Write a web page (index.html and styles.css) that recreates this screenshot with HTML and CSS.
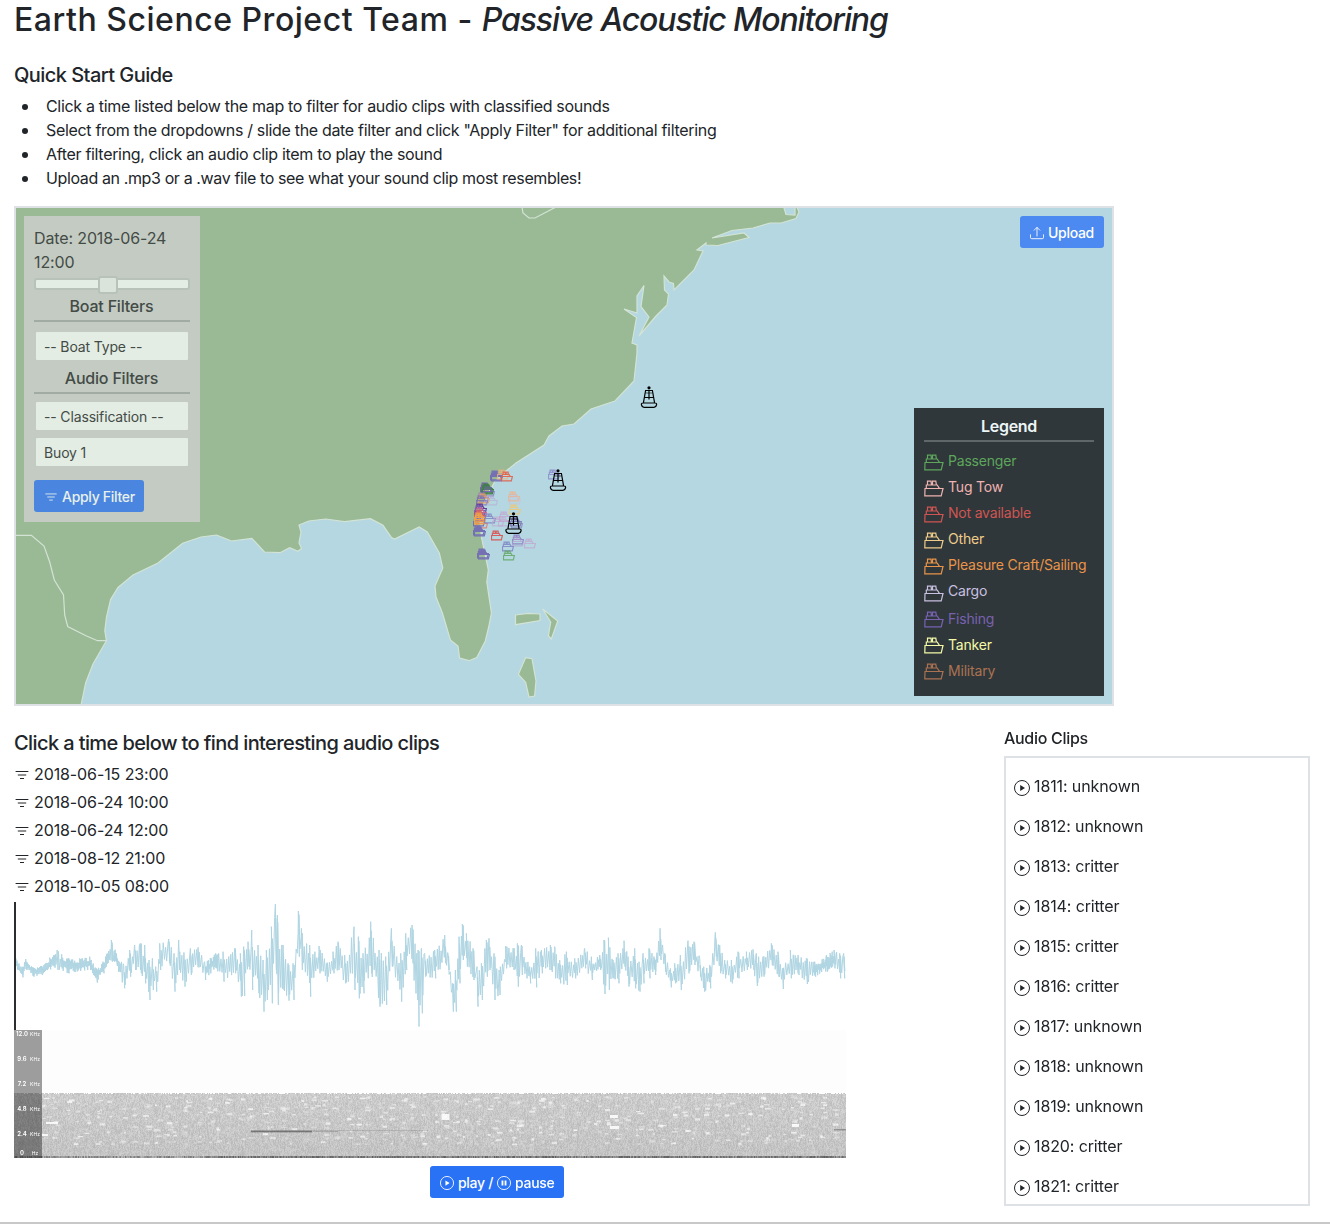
FILE: index.html
```
<!DOCTYPE html>
<html lang="en">
<head>
<meta charset="utf-8">
<title>Passive Acoustic Monitoring</title>
<link rel="stylesheet" href="styles.css">
</head>
<body>
<svg class="defs" aria-hidden="true">
  <symbol id="boat" viewBox="0 0 20 17"><path d="M1 8.5H19L17.2 15.8H.8ZM2.3 8.3V5H13.2L15.4 8.3M3.5 4.8V1.2H7L7.5 4.8M8.5 4.8V1.2H11.8L12.4 4.8" fill="none" stroke="currentColor"/></symbol>
  <symbol id="buoy" viewBox="0 0 18 24"><path d="M5.6 5.5H12.4L14.6 18H3.4ZM4.7 12.5H13.3M9 5V14.5M3 18H15Q17 18 16.5 20Q16 22.3 14 22.3H4Q2 22.3 1.5 20Q1 18 3 18Z" fill="none" stroke="#000" stroke-width="1.2"/><path d="M5.5 8H12.500" stroke="#000" stroke-width=".6"/><circle cx="9" cy="2.8" r="1.6"/></symbol>
  <symbol id="filter" viewBox="0 0 16 16"><path d="M2 4.5H14M4.2 8H11.8M6.4 11.5H9.6" stroke="currentColor" stroke-linecap="round"/></symbol>
  <symbol id="play" viewBox="0 0 16 16"><circle cx="8" cy="8" r="7.5" fill="none" stroke="currentColor"/><path d="M6.2 5V11L11 8Z" fill="currentColor"/></symbol>
  <symbol id="pause" viewBox="0 0 16 16"><circle cx="8" cy="8" r="7.5" fill="none" stroke="currentColor"/><path d="M5.2 5.2H7.3V10.8H5.2ZM8.7 5.2H10.8V10.8H8.7Z" fill="currentColor"/></symbol>
  <symbol id="upload" viewBox="0 0 16 16"><path d="M.5 10V13Q.5 14.5 2 14.5H14Q15.5 14.5 15.5 13V10M8 11.5V1.7M4.8 4.8L8 1.6L11.2 4.8" fill="none" stroke="currentColor" stroke-linecap="round"/></symbol>
</svg>
<header>
  <h1 class="title">Earth Science Project Team - <em>Passive Acoustic Monitoring</em></h1>
  <h2 class="guide-title">Quick Start Guide</h2>
  <ul class="guide">
    <li>Click a time listed below the map to filter for audio clips with classified sounds</li>
    <li>Select from the dropdowns / slide the date filter and click "Apply Filter" for additional filtering</li>
    <li>After filtering, click an audio clip item to play the sound</li>
    <li class="tight">Upload an .mp3 or a .wav file to see what your sound clip most resembles!</li>
  </ul>
</header>
<section class="map">
  <svg class="chart" viewBox="16 208 1096 496">
    <g class="land">
      <path d="M10 200H784V208L786 214.5 795 215V208L797 207 799 212 796 218.5 781 223H770L753 228 732 230.5 712 238 744 233 749 237.5 718 245.5 706 245V243L697 250 703 251 694 270 674 290 673.5 283.5 669 282 664 276 664.5 290 668.5 294 667 305 656 316 639 336 649 317 641 306.5 644 285.5 637 296V313L624 309 636.5 317.5 632 343 637 345V353L634 381 615 401 591 409 574 424 562 426 549 436 544 445 516 463 506 471 495 481 485 500 480 520 481.4 537 488.3 570 486.8 582 491.4 613 488.7 627 485.3 641 476.8 657.5 469 660.7 459.6 658 458 646 450.4 640 442.4 613 436 597 435 586 442.8 568 439.3 553 427.3 532 419.2 527 394.6 539 391.5 537.5 383 525.3 370.5 518.7 344.5 521.7 325.7 519 308.8 521 299 525 301 532 299 543 301.5 548.5 298 551.3 289.7 547.7 280 552.7 264.5 552 251.8 538.3 231.5 541 216.6 535 201 537 182.6 543.3 158 563 133 575 118 587.5 110.6 599.5 106.5 617 104.8 630.7 106.4 640.7 93 664 85.7 682.7 80 710H10Z"/>
      <path d="M515.5 615L528 613.3 540 614V620.5L515.5 624.7ZM542.7 609L557.7 621 551.3 639 548.4 635.7 550.7 622ZM525.6 657.7L532 658.7 536 681 534.6 696 529 697 525.6 682.3 518.4 674.3Z"/>
      <path d="M10 535.3H31.4L44 546 49.7 562 54.3 580 63.5 595 64.7 615 67.7 626.5 86 635.7 97.5 640.7H106.4M522 207L523 213 529 218H535L556 207" fill="none"/>
    </g>
    <g id="vessels" class="vessels"></g>
    <use href="#buoy" x="640" y="385" width="18" height="24"/>
    <use href="#buoy" x="549" y="468" width="18" height="24"/>
    <use href="#buoy" x="504.500" y="511" width="18" height="24"/>
  </svg>
  <form class="filters">
    <div class="date">Date: 2018-06-24 12:00</div>
    <div class="slider"><span class="thumb"></span></div>
    <h3 class="panel-title">Boat Filters</h3>
    <div class="select first">-- Boat Type --</div>
    <h3 class="panel-title audio">Audio Filters</h3>
    <div class="select">-- Classification --</div>
    <div class="select">Buoy 1</div>
    <button class="btn apply" type="button"><svg width="14" height="14"><use href="#filter"/></svg><span>Apply Filter</span></button>
  </form>
  <button class="btn upload" type="button"><svg width="14" height="14"><use href="#upload"/></svg><span>Upload</span></button>
  <aside class="legend">
    <h3 class="panel-title">Legend</h3>
    <ul>
      <li class="passenger"><svg><use href="#boat"/></svg>Passenger</li>
      <li class="tug"><svg><use href="#boat"/></svg>Tug Tow</li>
      <li class="na"><svg><use href="#boat"/></svg>Not available</li>
      <li class="other"><svg><use href="#boat"/></svg>Other</li>
      <li class="pleasure"><svg><use href="#boat"/></svg>Pleasure Craft/Sailing</li>
      <li class="cargo"><svg><use href="#boat"/></svg>Cargo</li>
      <li class="fishing"><svg><use href="#boat"/></svg>Fishing</li>
      <li class="tanker"><svg><use href="#boat"/></svg>Tanker</li>
      <li class="military"><svg><use href="#boat"/></svg>Military</li>
    </ul>
  </aside>
</section>
<main class="lower">
  <section class="player">
    <h2 class="times-title">Click a time below to find interesting audio clips</h2>
    <ul class="times">
      <li><svg width="16" height="16"><use href="#filter"/></svg>2018-06-15 23:00</li>
      <li><svg width="16" height="16"><use href="#filter"/></svg>2018-06-24 10:00</li>
      <li><svg width="16" height="16"><use href="#filter"/></svg>2018-06-24 12:00</li>
      <li><svg width="16" height="16"><use href="#filter"/></svg>2018-08-12 21:00</li>
      <li><svg width="16" height="16"><use href="#filter"/></svg>2018-10-05 08:00</li>
    </ul>
    <canvas id="wave" class="wave" width="830" height="128"></canvas>
    <div class="spectrogram">
      <canvas id="spectrum" width="832" height="128"></canvas>
      <div class="axis">
        <span><b>12.0</b><i>KHz</i></span><span><b>9.6</b><i>KHz</i></span><span><b>7.2</b><i>KHz</i></span><span><b>4.8</b><i>KHz</i></span><span><b>2.4</b><i>KHz</i></span><span><b>0</b><i>Hz</i></span>
      </div>
    </div>
    <button class="btn toggle" type="button"><svg width="14" height="14"><use href="#play"/></svg><span>play /</span><svg width="14" height="14"><use href="#pause"/></svg><span>pause</span></button>
  </section>
  <section class="clips">
    <h3>Audio Clips</h3>
    <ul>
      <li><svg width="16" height="16"><use href="#play"/></svg>1811: unknown</li>
      <li><svg width="16" height="16"><use href="#play"/></svg>1812: unknown</li>
      <li><svg width="16" height="16"><use href="#play"/></svg>1813: critter</li>
      <li><svg width="16" height="16"><use href="#play"/></svg>1814: critter</li>
      <li><svg width="16" height="16"><use href="#play"/></svg>1815: critter</li>
      <li><svg width="16" height="16"><use href="#play"/></svg>1816: critter</li>
      <li><svg width="16" height="16"><use href="#play"/></svg>1817: unknown</li>
      <li><svg width="16" height="16"><use href="#play"/></svg>1818: unknown</li>
      <li><svg width="16" height="16"><use href="#play"/></svg>1819: unknown</li>
      <li><svg width="16" height="16"><use href="#play"/></svg>1820: critter</li>
      <li><svg width="16" height="16"><use href="#play"/></svg>1821: critter</li>
    </ul>
  </section>
</main>
<script src="app.js"></script>
</body>
</html>
```
FILE: styles.css
```
* { box-sizing: border-box; }
html, body { height: 1224px; overflow: hidden; }
body { margin: 0; padding: 0 14px; background: #fff; color: #212529; font: 16px/24px Inter, "Liberation Sans", sans-serif; letter-spacing: -.25px; }
h1, h2, h3, ul { margin: 0; padding: 0; font-weight: 500; }
ul { list-style: none; }
li { font-weight: 400; }
svg { flex: none; }
.defs { display: block; width: 0; height: 0; }
.title { height: 38px; font-size: 32px; line-height: 39px; letter-spacing: .53px; white-space: nowrap; }
.title em { letter-spacing: -1.12px; }
.guide-title { margin-top: 25px; font-size: 20px; line-height: 24px; letter-spacing: -.55px; }
.guide { margin-top: 7px; letter-spacing: -.32px; }
.guide li { display: flex; align-items: center; }
.guide li::before { content: ""; width: 6px; height: 6px; margin: 1px 18px 0 8px; border-radius: 50%; background: #212529; }
.guide .tight { letter-spacing: -.38px; }
.map { position: relative; width: 1100px; height: 500px; margin-top: 16px; border: 2px solid #dee2e6; background: #b4d7e2; }
.chart { display: block; width: 1096px; height: 496px; }
.land { fill: #99ba94; stroke: #d3e3d5; stroke-width: 1.2; }
.vessels { stroke-width: 1.9; }
.filters { position: absolute; left: 8px; top: 8px; width: 176px; height: 306px; padding: 10px; background: #c3cbc3; color: #434b46; }
.date { letter-spacing: -.13px; }
.slider { height: 12px; margin-top: 4px; border: 2px solid #b8c2b9; border-radius: 3px; background: #e3ede4; }
.thumb { display: block; width: 20px; height: 18px; margin: -4px 0 0 62px; border: 2px solid #b8c2b9; border-radius: 3px; background: #dae4db; }
.panel-title { height: 28px; border-bottom: 2px solid #a1aaa3; font-size: 16px; line-height: 24px; text-align: center; letter-spacing: -.2px; }
.filters .panel-title { margin-top: 4px; padding-right: 1px; font-weight: 550; }
.legend .panel-title { font-weight: 600; letter-spacing: -.3px; }
.filters .audio { margin-top: 6px; }
.select { height: 28px; margin: 8px 2px 0; padding: 0 8px; border-radius: 1px; background: #e3ede4; font-size: 14px; line-height: 30px; letter-spacing: -.15px; }
.first { margin-top: 10px; }
.btn { display: flex; align-items: center; gap: 4px; height: 32px; padding: 0 10px; border: 0; border-radius: 3px; color: #fff; background: #2a72f5; font: 500 14px/21px Inter, "Liberation Sans", sans-serif; letter-spacing: -.3px; white-space: nowrap; }
.btn svg { margin-top: 2px; }
.apply { width: 110px; margin-top: 14px; background: #4a86df; color: #e7f0ec; }
.upload { position: absolute; left: 1004px; top: 8px; width: 84px; background: #4c8af1; }
.legend { position: absolute; left: 898px; top: 200px; width: 190px; height: 288px; padding: 6px 10px; background: #2f373a; color: #edf5f7; stroke-width: 1.2; }
.legend ul { padding-top: 6px; }
.legend .panel-title { border-color: #5f6769; }
.legend li { display: flex; gap: 4px; height: 26px; font-size: 14px; line-height: 25px; letter-spacing: -.2px; }
.legend svg { width: 20px; height: 17px; margin-top: 6px; }
.legend .cargo svg { margin-top: 7px; }
.legend .fishing { margin-top: 1px; }
.legend .fishing, .legend .tanker, .legend .military { line-height: 27px; }
.passenger { color: #5ea65c; }
.tug { color: #efb3b2; }
.na { color: #d05552; }
.other { color: #f0cc8b; }
.pleasure { color: #e99449; }
.cargo { color: #c8c0e0; }
.fishing { color: #7862b1; }
.tanker { color: #f5f9a8; }
.military { color: #ab7252; }
.lower { display: flex; gap: 158px; padding-top: 20px; border-bottom: 2px solid #c8c8c8; margin: 0 -14px; padding-left: 14px; height: 518px; }
.player { width: 832px; padding-top: 5px; }
.times-title { font-size: 20px; line-height: 24px; letter-spacing: -.6px; }
.times { padding-top: 5px; }
.times li { display: flex; align-items: center; gap: 4px; height: 28px; letter-spacing: -.1px; }
.times svg { margin-top: 2px; }
.wave { display: block; box-sizing: content-box; border-left: 2px solid #2b2d2f; margin-top: 2px; height: 128px; }
.spectrogram { position: relative; height: 128px; }
.spectrogram canvas { display: block; }
.axis { position: absolute; left: 0; top: 0; width: 28px; height: 128px; background: rgba(0, 0, 0, .38); color: #fff; font-size: 6px; line-height: 8px; letter-spacing: 0; }
.axis span { display: flex; height: 25px; padding-right: 2px; }
.axis span:nth-child(5) { height: 19px; }
.axis b { width: 16px; font-weight: 600; text-align: center; }
.axis i { flex: 1; font-size: 5px; font-style: normal; text-align: center; }
.toggle { width: 134px; margin: 8px 0 0 416px; }
.clips { width: 306px; }
.clips h3 { font-size: 16px; line-height: 24px; letter-spacing: -.3px; }
.clips ul { height: 450px; margin-top: 6px; padding: 8px; border: 2px solid #dee2e6; overflow: hidden; letter-spacing: -.12px; }
.clips li { display: flex; align-items: center; gap: 4px; height: 40px; }
.clips svg { margin-top: 3px; }
```
FILE: app.js
```
// Small seeded generator keeps the drawing stable between visits.
let seed = 7;
const rnd = () => (seed = (seed * 16807) % 2147483647) / 2147483647;

// Vessel positions: x, y, colour, opacity
const vessels = [[490,470,'#7570b3',1],[491,471,'#7570b3',1],[497,469,'#f0b27a',.8],[501,471,'#e2604a',.9],[548,469,'#8a87c8',.8],[480,482,'#7862b1',1],[482,484,'#3f7f49',1],[481,483,'#3f7f49',.9],[483,486,'#7862b1',.6],[477,492,'#9a80bd',.9],[478,493,'#e9a060',.8],[476,495,'#7570b3',.8],[486,495,'#b9a3cf',.5],[508,491,'#efb38b',.8],[509,494,'#d9b6c9',.4],[509,504,'#f0c86e',.8],[475,503,'#6a3d9a',1],[474,505,'#7862b1',1],[475,507,'#cf668e',.9],[474,510,'#d9534f',.8],[473,516,'#7570b3',1],[476,518,'#e2756c',.8],[474,512,'#f0a048',1],[474,514,'#f0a048',1],[484,513,'#7c80c4',.8],[499,511,'#c5a1ce',.7],[492,516,'#c5a1ce',.6],[498,516,'#c5a1ce',.6],[510,516,'#7570b3',.8],[511,518,'#7570b3',.6],[473,525,'#7570b3',1],[474,526,'#7570b3',1],[491,530,'#d9534f',.9],[512,534,'#8c82c5',.9],[512,536,'#b19bcd',.6],[524,538,'#c5a1ce',.7],[502,541,'#7c80c4',.8],[503,550,'#5ea65c',.8],[477,548,'#7570b3',1],[478,549,'#7570b3',1]];
document.getElementById('vessels').innerHTML = vessels.map(v =>
  `<use href="#boat" x="${v[0]}" y="${v[1]}" width="12" height="11" color="${v[2]}" opacity="${v[3]}"/>`).join('');

// Amplitude envelope: position, upper bound, lower bound (thirds of a pixel)
const env = `48,205,235 67,230,262 78,207,238 100,232,260 125,228,255 150,203,238 172,180,240 205,205,250 240,205,243 270,200,240 290,235,278 310,215,250 335,150,215 350,190,228 372,225,295 390,180,260 405,165,240 422,160,250 435,165,280 448,210,330 458,205,300 468,230,305 480,160,240 507,147,220 523,190,305 537,150,240 553,190,290 572,175,255 595,172,232 615,215,270 648,190,235 670,185,275 705,175,250 722,190,320 732,170,318 745,155,230 756,120,300 775,165,310 790,210,365 800,180,330 815,110,340 827,42,240 833,75,345 850,165,300 865,220,332 880,220,330 896,63,200 905,115,240 930,165,320 958,168,250 980,220,275 1000,185,250 1015,155,240 1035,195,280 1063,110,300 1076,140,325 1090,190,310 1113,95,250 1138,180,350 1158,200,345 1175,115,230 1203,190,335 1218,130,240 1237,105,220 1255,180,410 1265,175,370 1275,190,260 1305,180,265 1335,135,220 1345,190,240 1358,280,365 1367,240,365 1378,140,280 1388,102,210 1400,130,230 1420,175,270 1432,230,350 1445,220,330 1460,150,260 1468,145,240 1483,190,330 1498,240,315 1518,168,235 1540,175,240 1553,160,290 1565,165,255 1590,230,280 1608,175,292 1625,180,250 1652,165,240 1665,170,265 1680,210,280 1700,185,285 1725,205,265 1755,175,235 1775,200,270 1800,195,240 1813,150,312 1826,143,300 1840,210,265 1855,190,280 1873,152,230 1885,200,290 1905,175,295 1918,215,305 1930,190,280 1948,175,265 1965,205,255 1981,115,210 1995,190,245 2012,235,292 2025,220,280 2042,195,300 2065,152,250 2083,155,225 2100,205,260 2112,230,305 2130,225,295 2147,127,200 2160,165,250 2175,210,265 2195,210,280 2215,185,265 2240,185,240 2260,178,240 2270,190,288 2290,200,260 2315,160,225 2335,185,260 2348,235,297 2372,180,265 2395,195,255 2420,205,282 2445,215,260 2480,195,245 2503,180,235 2520,190,265 2532,190,265 2537,205,245`
  .split(' ').map(s => s.split(',').map(Number));
const w = document.getElementById('wave').getContext('2d');
w.strokeStyle = '#b0d5e2';
w.lineWidth = 1;
w.lineJoin = 'bevel';
w.beginPath();
let k = 0, up = true, px = 0;
while (px < 830) {
  const t = (px + 16) * 3;
  while (k < env.length - 2 && env[k + 1][0] < t) {
    k++;
    // each listed extreme is reached exactly
    const ex = env[k][0] / 3 - 16;
    w.lineTo(ex - .3, (env[k][1] - 36) / 3);
    w.lineTo(ex + .7, (env[k][2] - 36) / 3);
    up = true;
  }
  const a = env[k], b = env[k + 1], f = Math.min(1, (t - a[0]) / (b[0] - a[0]));
  const hi = a[1] + (b[1] - a[1]) * f, lo = a[2] + (b[2] - a[2]) * f;
  const span = lo - hi, inset = rnd() * span * .36;
  const y = up ? hi + inset : lo - inset;
  w.lineTo(px, (y - 36) / 3);
  up = !up;
  px += span < 55 ? .5 : .8 + rnd() * .5;
}
w.stroke();

// Spectrogram: speckled band below 6 kHz with pale dashes and two tones
const s = document.getElementById('spectrum').getContext('2d');
s.fillStyle = '#fdfdfd';
s.fillRect(0, 0, 832, 128);
const top6 = 63;
for (let x = 0; x < 832; x++) {
  let g = 200;
  for (let y = top6 + (rnd() < .35 ? 1 : 0); y < 128; y++) {
    g = g * .35 + (203 - (y - top6) * .12 + (rnd() - .5) * 34) * .65;
    s.fillStyle = `rgb(${g},${g},${g})`;
    s.fillRect(x, y, 1, 1);
  }
}
for (let c = 0; c < 74; c++) {
  const cx = 28 + c * 10.8 + rnd() * 6, n = 3 + rnd() * 8;
  for (let i = 0; i < n; i++) {
    s.fillStyle = `rgba(255,255,255,${.2 + rnd() * .5})`;
    s.fillRect(cx + (rnd() - .5) * 5, top6 + 3 + rnd() * 48, 2 + rnd() * 4, 1 + rnd() * 1.5);
  }
}
s.fillStyle = 'rgba(255,255,255,.85)';
s.fillRect(427.5, 84, 8, 6);
s.fillRect(596, 96, 9, 3);
s.fillRect(596, 85, 8, 3);
s.fillRect(778, 94, 7, 3);
s.fillRect(28, 104, 6, 2);
s.fillRect(32, 92, 12, 2);
s.fillStyle = 'rgba(90,90,90,.75)';
s.fillRect(237, 100.5, 61, 1.8);
s.fillStyle = 'rgba(100,100,100,.45)';
s.fillRect(298, 100.5, 26, 1.2);
s.fillRect(324, 100.5, 90, .5);
s.fillStyle = 'rgba(90,90,90,.5)';
s.fillRect(820, 99, 12, 1.5);
for (let x = 0; x < 832; x++) {
  s.fillStyle = `rgba(70,70,70,${x < 190 ? .1 + rnd() * .5 : .3 + rnd() * .5})`;
  s.fillRect(x, 126, 1, 2);
}
```
